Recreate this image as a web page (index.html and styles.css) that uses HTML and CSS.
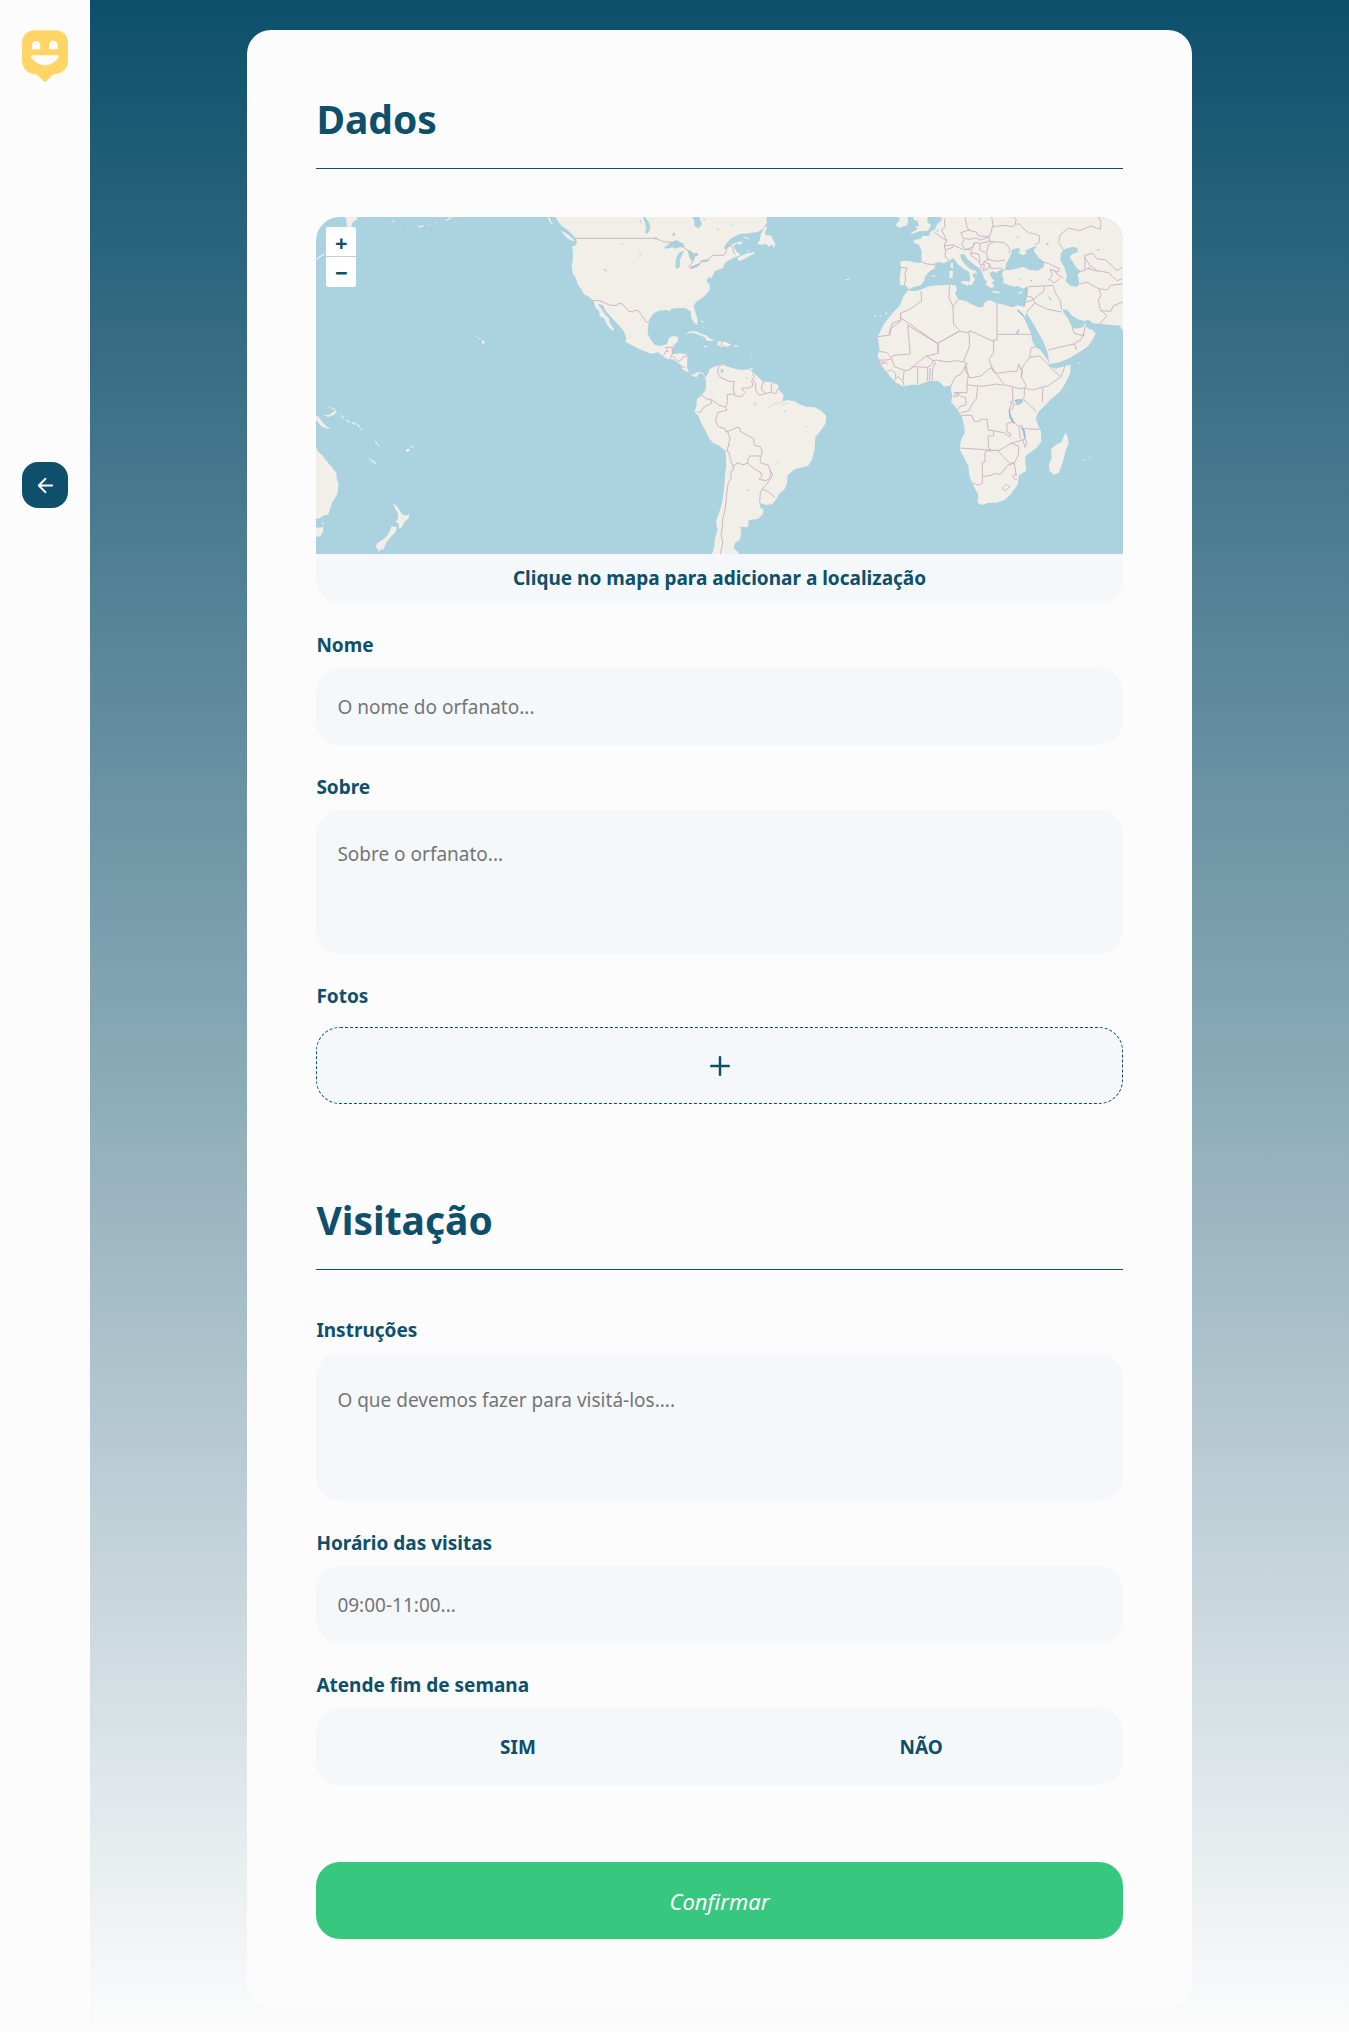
FILE: index.html
```html
<!DOCTYPE html>
<html lang="pt-BR">
<head>
  <meta charset="utf-8">
  <meta name="viewport" content="width=device-width, initial-scale=1">
  <title>Cadastro de orfanato</title>
  <link rel="stylesheet" href="styles.css">
</head>
<body>
  <div class="page">
    <aside class="sidebar">
      <svg class="logo" viewBox="0 0 138 155" role="img" aria-label="Logotipo">
        <path fill="#ffd666" d="M42 0H96Q138 0 138 42V90Q136 128 98 132Q93 133 90 136L73 153Q69 157 65 153L48 136Q45 133 40 132Q2 128 0 90V42Q0 0 42 0Z"/>
        <path fill="#fcfcfc" d="M30 57V45A12 12 0 0 1 55 45V57ZM81 57V45A12 12 0 0 1 107 45V57ZM29 75H108Q113 76 109 82Q93 105 69 105T28 82Q24 76 29 75Z"/>
      </svg>
      <button class="back" type="button" aria-label="Voltar">
        <svg viewBox="0 0 24 24" width="24" height="24"><path d="M19 12H5M12 19L5 12L12 5"/></svg>
      </button>
    </aside>

    <main class="content">
      <form class="card">
        <section class="section">
          <h2 class="title">Dados</h2>

          <div class="map">
            <svg class="map-canvas" viewBox="0 0 2421 1011" preserveAspectRatio="xMidYMid slice" aria-hidden="true">
              <!-- Pacific -->
              <g class="land" transform="translate(-18 -21)">
                <path d="M106 15L110 30 112 50 125 52 128 38 142 28 143 15ZM18 150L30 138 45 130 46 132 32 142 18 153Z"/>
                <path d="M18 615L28 622 36 634 48 647 64 657 48 655 32 646 18 628ZM42 616L58 615 70 607 78 601 81 606 72 615 56 621ZM56 588L76 597 75 600 58 591ZM95 614L104 624 101 626 94 617ZM110 628L122 636 119 639 109 631ZM127 636L138 640 136 644 126 639ZM143 640L152 650 148 652 142 644ZM150 655L160 658 158 661 150 658ZM198 692L203 698 200 706 197 698ZM206 702L211 709 208 711ZM176 742L199 758 200 763 188 756ZM289 718L298 716 301 723 292 727ZM301 710L310 707 311 711 303 714Z"/>
                <path d="M18 708L24 724 38 736 50 752 64 768 80 788 81 806 87 822 84 848 78 862 68 876 62 894 56 914 44 916 30 925 18 926ZM18 952L30 953 41 950 40 964 33 978 24 981 18 976ZM37 938L42 937 41 947Z"/>
                <path d="M250 879L264 890 271 904 280 916 292 916 300 912 296 926 284 936 277 952 268 956 268 943 259 935 266 925 264 908 256 894ZM246 948L252 950 262 952 258 966 246 978 238 988 229 1000 222 1018 208 1020 197 1010 203 1000 214 992 230 980 240 965ZM204 1020L211 1021 208 1027Z"/>
                <path d="M515 393L521 391 527 398 520 403ZM506 384L512 384 515 388 508 387ZM497 379L502 379 501 382ZM484 373L488 372 488 375ZM247 31L254 32 254 37 249 35ZM324 50L340 46 344 49 328 53ZM352 46L362 43 362 46ZM376 40L384 37 385 40ZM404 32L414 27 425 21 430 21 416 31ZM292 46L300 49 293 49ZM712 21L720 24 726 38 732 42 724 41Z"/>
              </g>
              <!-- Americas -->
              <g transform="translate(702 -21)">
                <path class="land" d="M14 15L26 34 36 48 52 58 66 72 78 84 82 98 76 108 68 108 70 130 70 150 66 165 69 190 80 208 85 225 97 240 103 253 118 260 132 272 136 290 148 303 150 318 163 325 173 345 190 364 193 357 180 338 178 325 165 313 158 300 148 288 147 281 160 286 168 302 180 316 195 332 210 348 222 362 230 383 228 396 245 405 270 418 305 431 325 427 342 440 352 447 370 448 385 458 397 468 398 478 410 484 420 490 425 497 440 502 447 493 455 489 463 496 466 505 470 515 468 540 457 555 442 568 440 590 435 605 445 615 455 640 468 662 478 685 490 698 510 708 528 722 530 760 526 800 523 840 517 880 508 910 499 935 504 960 496 985 494 1010 486 1035 570 1035 565 1025 552 1015 556 998 570 990 575 970 572 950 595 952 597 930 625 927 640 912 642 900 632 892 630 878 650 885 668 882 680 868 690 850 705 838 712 820 714 795 735 778 775 768 787 750 795 715 797 682 815 660 828 640 830 618 815 602 795 592 770 590 748 582 735 574 715 570 698 576 702 556 688 540 686 525 665 516 640 515 625 500 610 488 600 478 580 480 560 478 540 472 528 468 517 462 508 466 492 471 480 478 475 492 468 500 460 488 445 486 430 494 418 488 412 472 413 450 413 435 395 430 370 433 366 424 375 405 385 392 386 380 370 378 358 384 352 402 335 408 315 404 302 388 294 370 296 345 299 328 312 310 328 302 350 300 362 304 364 296 390 294 405 294 415 299 424 304 424 322 435 340 442 345 444 330 437 305 432 288 440 275 462 260 480 240 480 225 470 212 478 201 486 204 496 182 520 175 525 160 545 146 560 140 573 136 560 124 552 108 560 100 572 105 582 94 556 98 530 116 522 116 530 100 545 85 570 72 600 70 625 65 640 56 652 40 650 15Z"/>
                <path class="land" d="M563 148L568 140 588 132 595 128 600 130 612 126 616 130 600 138 582 148 570 153ZM623 102L630 92 634 72 645 52 654 50 646 66 648 76 664 76 670 90 678 102 673 114 668 104 656 110 650 102 636 104ZM582 79L602 86 598 88 582 83ZM34 62L50 70 64 82 76 92 68 93 52 84 36 66ZM590 120L600 122 592 125Z"/>
                <path class="land" d="M407 374L420 364 440 364 455 372 470 376 482 386 495 391 480 394 470 390 466 382 450 376 432 368 418 370ZM500 396L512 394 530 397 546 405 530 410 520 407 516 413 508 406 498 406 508 402ZM461 407L474 408 472 412 464 411ZM554 406L567 407 566 410 555 410ZM452 332L463 334 460 338ZM460 350L465 352 464 357ZM604 427L606 436 603 432ZM606 441L608 449 605 446ZM602 473L609 474 608 480 602 479ZM883 208L900 207 896 211Z"/>
                <path class="sea" d="M343 114L354 104 368 95 380 90 402 101 404 112 388 112 378 116 368 112 352 116ZM377 172L379 146 390 126 404 122 398 134 390 150 392 168 384 176ZM412 121L424 122 430 130 444 128 446 136 436 140 434 152 424 150 418 138 416 128ZM420 172L436 164 453 159 448 168 428 177ZM454 153L470 148 480 149 474 156 458 157ZM425 15L452 15 450 26 457 42 446 56 434 46 434 34ZM278 15L284 34 290 50 286 68 292 71 300 62 302 50 296 34 286 22 284 15ZM272 28L278 44 270 34ZM315 80L322 82 320 90 316 88ZM369 68L377 70 374 80 369 77ZM162 175L170 180 173 186 165 182ZM460 28L468 26 464 32ZM502 54L508 58 502 62ZM540 48L548 43 548 48ZM513 477L521 478 522 486 515 490ZM589 840L596 838 597 845ZM535 700L541 705 538 710ZM702 600L708 603 705 607ZM614 577L621 580 619 588ZM588 502L594 502 592 507Z"/>
                <path class="border" d="M80 85H318L345 96 372 97 402 112 426 130 428 158 418 170 424 175 452 160 454 153 476 150 488 136 522 136 530 124 532 110 540 106 550 112 552 128 558 134M132 271L150 272 182 286 204 286 206 280 218 282 238 304 250 306 254 301 266 302 282 324 290 336 298 337M342 436L348 424 356 424 348 412 368 412 375 404M368 412V432L361 446M370 438L385 455 396 448 402 440 414 438M396 468L406 474M420 488L426 498M466 490L468 502M516 395V409"/>
                <path class="border" d="M518 463L506 470 504 488 512 502 526 508 538 514H554L550 534 556 556M608 492L614 500 606 512 610 528 596 534 576 534 586 548 576 560 558 558 550 552 532 554 534 572 528 592 506 584 488 570 470 566 456 556M610 508L618 522 618 540 628 556 650 550M642 516L636 528 636 540 650 550 666 546M668 518L664 534 666 546 678 552 686 534M484 570L486 580 462 592 452 608 442 604M528 592L532 600 504 608 498 632 506 650 526 656 528 664 542 662 562 652 570 654 572 664 612 686 614 706 632 710 638 726 632 744 632 758M528 664L534 666 541 684 536 708 532 724 538 726 542 748 550 768 558 764 562 758 580 764 594 760M632 738L600 738 594 750 596 762 614 776 634 788 636 800 628 808 650 812 660 804 664 790 656 766 632 758M660 778L670 796 650 824 638 836 632 850 630 878M638 836L660 848 676 862M550 768L552 780 544 784 544 804 536 820 532 844 530 868 526 900 520 926 518 954 514 974 520 996 512 1033"/>
                <path class="river" d="M606 580L618 590M656 594L672 582 690 578 712 570M696 584L716 580M766 652L778 648M675 764L686 754M208 104L222 99M264 120L274 132 268 142"/>
              </g>
              <!-- Europe, Africa and the Middle East -->
              <g transform="translate(1602 -21)">
                <path class="land" d="M274 15L276 30 262 44 256 58 242 66 238 78 218 78 214 86 192 90 192 98 208 104 216 122 216 158 200 158 182 154 162 152 152 156 154 180 150 206 152 226 168 226 178 238 190 232 214 226 224 212 226 200 240 184 256 174 254 160 268 156 282 160 298 152 310 144 318 152 326 164 344 178 358 186 362 204 358 216 350 222 366 226 376 208 368 194 378 188 386 196 378 182 360 176 344 160 334 146 332 134 344 132 352 146 368 160 388 174 396 184 400 196 404 206 412 214 408 224 424 234 434 230 426 216 436 214 424 200 420 190 430 184 440 188 452 180 462 180 456 194 462 206 460 218 478 226 494 230 506 228 520 236 532 230 536 240 532 258 528 276 520 294 526 322 530 306 538 320 554 346 566 368 580 392 592 422 598 450 602 462 632 456 660 444 690 426 716 408 730 388 738 370 728 360 712 354 706 340 698 352 684 356 668 354 664 344 654 324 642 308 640 298 654 300 664 314 684 328 706 334 714 328 730 340 760 342 794 346 810 346 816 358 830 368 830 15Z"/>
                <path class="land" d="M182 242L196 244 216 238 240 228 270 226 300 224 318 226 322 240 316 250 326 268 350 274 364 282 386 292 400 292 404 278 420 270 438 278 468 286 488 292 504 286 520 290 528 318 522 318 512 304 524 326 534 348 544 370 548 392 556 410 572 420 588 442 600 460 600 470 618 476 646 468 663 464 662 488 648 518 632 544 604 568 582 590 566 606 558 626 568 652 574 664 575 696 560 714 534 732 526 742 530 782 508 796 504 824 484 852 464 870 440 878 416 878 398 885 384 878 386 856 374 832 360 800 356 768 342 742 330 716 334 690 346 668 342 640 336 616 318 592 304 576 308 560 304 540 306 526 284 530 268 514 240 512 208 524 182 524 162 530 140 518 122 500 108 482 92 462 84 436 90 416 84 380 102 344 128 310 152 286 160 262 176 240Z"/>
                <path class="land" d="M194 15L190 28 204 34 208 48 196 50 206 56 184 68 186 72 210 64 236 62 244 44 232 36 236 15ZM144 15L150 30 138 44 148 54 172 46 176 34 172 15ZM302 160L310 158 310 176 304 174ZM300 182L310 182 309 202 300 206ZM334 214L356 214 354 228 336 220ZM428 242L450 246 450 250 430 248ZM504 248L520 244 514 252ZM244 198L256 194 256 200ZM648 668L654 680 657 702 650 716 642 748 628 788 612 794 600 782 598 764 606 744 604 716 620 704 636 696 642 680ZM698 748L705 748 704 754ZM716 742L722 742 721 746ZM682 458L692 459 690 462ZM74 314L80 316 78 322ZM88 318L94 316 94 321ZM108 306L114 310 108 316ZM298 560L302 562 300 566Z"/>
                <path class="sea" d="M466 180L470 160 482 138 488 118 506 114 512 120 506 128 520 136 532 130 526 122 548 112 562 108 552 122 566 142 584 156 582 172 564 182 540 180 520 170 494 178 480 180ZM634 128L648 116 668 110 684 114 684 126 668 132 660 142 672 160 682 176 694 182 684 194 690 222 680 231 660 226 648 214 652 196 644 172 632 150ZM498 568L518 566 519 578 508 586 498 584ZM478 602L484 622 494 640 488 638 478 622ZM516 652L524 664 528 686 522 682ZM500 78L508 80 504 86ZM588 102L598 94 594 106ZM540 210L548 210 546 216ZM594 256L606 266 602 272ZM504 358L510 356 506 372 498 372ZM738 118L750 118 748 124ZM256 66L266 58 268 62ZM386 24L394 24 390 30ZM714 174L722 170 722 178ZM506 204L514 206 508 210ZM594 206L600 208 597 214Z"/>
                <path class="lake" d="M498 574H518M478 602L484 622 494 640M516 652L524 664 526 686M504 300L522 318"/>
                <path class="border" d="M152 172L172 174 166 190 168 208 164 226M216 156L232 162 254 164M254 66L270 78 290 92 284 108 288 122 286 140 298 150M286 120L310 112 312 104 284 108M284 26L286 50 276 60 286 80 292 94M346 21L352 50 358 60 334 68 340 84 360 88 378 84 392 90 418 82 420 94 392 100 374 98 368 112 344 120 312 106M354 60L380 66 386 78 420 80 426 60 430 44 426 21M430 50L460 46 492 50 496 42 510 42 522 56 536 68 556 72 570 78 568 98 556 104M492 21L500 30 496 42M420 94L442 96 462 98 474 106 482 122 476 130M344 88L336 104 348 118 366 120 376 98M392 102L390 120 412 130 414 148 400 158 392 176M366 124L364 136 384 150 392 164 404 162 402 182 396 178M360 128L388 132 392 156M402 182L416 176 420 162 404 156M414 148L442 154 466 150M420 162L424 176 450 174 464 180M412 126L416 104 432 96M628 94L632 74 656 54 690 62 724 48 752 58 754 36 746 21M626 96L636 112 644 124M706 178V136L728 130 742 146 768 150 788 168 802 182 818 172M706 142L720 166 744 182 776 188 802 212 818 206M692 186L714 176 744 184M692 222L712 216 728 226 748 236 772 240 782 226 818 222M566 152L596 160 612 168 630 176 626 186 600 178M602 180L608 196 600 206 612 220 630 206M612 178L622 192 640 204M536 230L576 228 610 226 618 250 632 272 636 300M584 228L582 244 546 272 528 276M532 258L548 262 556 278 532 306M556 280L594 298 636 306M532 230L528 246 528 268 524 290M748 238L754 256 746 270 752 298 772 318 760 330 750 342M750 302L784 304 790 288 818 276M668 354L674 370 702 378 706 346M702 370L694 390 674 400 680 420M674 402L628 412 596 420"/>
                <path class="border" d="M214 244L216 272 184 296 152 310 154 330 128 340 116 376 84 380M154 324L264 400 266 432M154 312L152 334 124 356 120 378M264 400L330 362 312 342 310 290 298 262 300 226M310 290L326 268M264 400L330 364 356 368 360 362 432 394V390H442V278M442 373H544M432 392V428L418 448 430 484 444 490 484 484 502 484 508 462 514 480 524 464 540 442 544 414 556 412M174 346L182 432 130 436 126 444 112 428 88 424M174 346L266 402M358 366L360 408 342 452 350 462 346 480 354 492 360 504 394 498 416 478 428 472 440 492 464 524 488 530 508 536 524 534 530 526 514 500 518 478M266 400L266 430 230 438 206 456 182 478M230 438L252 452 260 450 292 456 320 452 344 456M182 478L188 470 234 472 248 462 250 450M84 450H112L126 446 134 470 146 474 166 482 182 478M84 456H108M86 464L110 458 114 464M112 484L126 480 138 490 138 508M134 510L146 500 160 514 164 530M164 480L160 512M204 522V472M234 472V512M242 474L240 510M258 456L248 482 248 512M354 458L344 474 332 494 318 500 304 526M350 470L356 496 352 522 352 548H312M352 524L380 528 386 526 394 530 440 522 462 526M384 530L380 566 364 588 358 602 334 608M312 556L324 548 326 558 310 560M326 550L334 560 348 562 350 584 330 590 324 600M336 616L366 616 374 634 390 634 392 628 412 628 416 660 432 662V678H416V710L424 720 330 714M432 662L462 668 480 680 484 672 472 666 472 640 490 636M416 720L448 722 484 700 508 708 506 736 494 758 480 760 446 724M406 726V756H398V820L386 826 370 818M406 724L446 720M398 800L424 796 436 790 452 794 474 766 494 760 500 796M500 794A7 7 0 1 0 502 806M460 832L470 822 480 830 468 842 460 838ZM488 532L490 566 478 602M490 570L516 576 522 568 560 604M524 536L524 560 518 566M480 576L494 580 488 598 478 602M490 636L508 650 516 646 520 656 570 658M508 650L512 684 520 690 526 712 532 700 526 686 520 690 484 700M524 534L548 540 576 532 594 528 634 500 646 468M580 534L578 576M518 478L516 504M540 442L570 438 594 462 606 476 634 500"/>
              </g>
            </svg>
            <div class="zoom">
              <button class="zoom-button" type="button" aria-label="Aproximar">+</button>
              <button class="zoom-button" type="button" aria-label="Afastar">−</button>
            </div>
            <p class="map-caption">Clique no mapa para adicionar a localização</p>
          </div>

          <div class="field">
            <label class="label" for="name">Nome</label>
            <input class="control" id="name" type="text" placeholder="O nome do orfanato...">
          </div>
          <div class="field">
            <label class="label" for="about">Sobre</label>
            <textarea class="control control-area" id="about" placeholder="Sobre o orfanato..."></textarea>
          </div>
          <div class="field field-photos">
            <span class="label" id="photos-label">Fotos</span>
            <button class="upload" type="button" aria-labelledby="photos-label">
              <svg viewBox="0 0 24 24" width="30" height="30"><path d="M12 5V19M5 12H19"/></svg>
            </button>
          </div>
        </section>

        <section class="section">
          <h2 class="title">Visitação</h2>
          <div class="field">
            <label class="label" for="instructions">Instruções</label>
            <textarea class="control control-area control-tall" id="instructions" placeholder="O que devemos fazer para visitá-los...."></textarea>
          </div>
          <div class="field">
            <label class="label" for="hours">Horário das visitas</label>
            <input class="control" id="hours" type="text" placeholder="09:00-11:00...">
          </div>
          <div class="field">
            <span class="label" id="weekend-label">Atende fim de semana</span>
            <div class="choices" role="group" aria-labelledby="weekend-label">
              <button class="choice" type="button">SIM</button>
              <button class="choice" type="button">NÃO</button>
            </div>
          </div>
        </section>

        <button class="confirm" type="submit">Confirmar</button>
      </form>
    </main>
  </div>
</body>
</html>
```
FILE: styles.css
```css
* {
  box-sizing: border-box;
  margin: 0;
  padding: 0;
}

body,
button,
input,
textarea {
  font-family: "Noto Sans", sans-serif;
  font-size: 19px;
}

body {
  color: #0e4f6b;
}

button {
  border: 0;
  color: inherit;
  cursor: pointer;
}

.page {
  display: flex;
  min-height: 100vh;
  background: linear-gradient(180deg, #0d4f6b 0%, #fcfcfc 100%);
}

.sidebar {
  display: flex;
  flex-direction: column;
  align-items: center;
  gap: 380px;
  flex: 0 0 90px;
  padding-top: 30px;
  background: #fcfcfc;
}

.logo {
  width: 46px;
  height: 52px;
}

.back {
  display: grid;
  place-items: center;
  width: 46px;
  height: 46px;
  border-radius: 16px;
  background: #0e4f6b;
}

.back svg,
.upload svg {
  fill: none;
  stroke-linecap: round;
  stroke-linejoin: round;
  stroke-width: 2;
}

.back svg {
  width: 23px;
  height: 23px;
  stroke: #fff;
}

.content {
  flex: 1;
  padding: 30px 0 25px;
}

.card {
  width: 75%;
  margin: 0 auto;
  padding: 68px 69px;
  border-radius: 24px;
  background: #fcfcfc;
}

.title {
  margin-bottom: 48px;
  padding-bottom: 28px;
  border-bottom: 1px solid #0e4f6b;
  font-size: 39px;
  line-height: 42px;
}

.section + .section {
  margin-top: 95px;
}

.map {
  position: relative;
  overflow: hidden;
  border-radius: 24px;
  background: #f4f8fb;
}

.map-canvas {
  display: block;
  width: 100%;
  height: 337px;
  background: #aad3df;
}

.land {
  fill: #f2efe9;
}

.sea {
  fill: #aad3df;
}

.border,
.river,
.lake {
  fill: none;
  stroke-width: 3;
}

.border {
  stroke: #cdb7c6;
}

.river {
  stroke: #d5dddd;
}

.lake {
  stroke: #8fb9d4;
  stroke-width: 4;
}

.zoom {
  position: absolute;
  top: 10px;
  left: 10px;
  overflow: hidden;
  border-radius: 2px;
}

.zoom-button {
  display: block;
  width: 30px;
  height: 30px;
  background: #fff;
  font-size: 22px;
  font-weight: 700;
  line-height: 30px;
}

.zoom-button:first-child {
  border-bottom: 1px solid #ccc;
}

.map-caption {
  padding: 12px 12px 13px;
  font-weight: 700;
  line-height: 24px;
  text-align: center;
}

.field {
  display: flex;
  flex-direction: column;
  gap: 11px;
}

.map + .field,
.field + .field {
  margin-top: 30px;
}

.field-photos {
  gap: 19px;
}

.label {
  font-weight: 700;
  line-height: 24px;
}

.control {
  width: 100%;
  height: 77px;
  padding: 0 21px;
  border: 0;
  border-radius: 24px;
  outline: 0;
  background: #f4f8fb;
  color: #0e4f6b;
}

.control::placeholder {
  color: #757575;
}

.control-area {
  height: 144px;
  padding: 32px 21px;
  line-height: 24px;
  resize: none;
}

.control-tall {
  height: 148px;
  padding-top: 35px;
}

.upload {
  display: grid;
  place-items: center;
  height: 77px;
  border: 1px dashed #0e4f6b;
  border-radius: 24px;
  background: #f4f8fb;
}

.upload svg {
  stroke: #0e4f6b;
}

.choices {
  display: grid;
  grid-template-columns: 1fr 1fr;
  overflow: hidden;
  border-radius: 24px;
}

.choice {
  height: 77px;
  background: #f4f8fb;
  font-weight: 700;
}

.confirm {
  width: 100%;
  height: 77px;
  margin-top: 77px;
  border-radius: 24px;
  background: #37c77f;
  color: #fff;
  font-size: 22px;
  font-style: italic;
}
```
